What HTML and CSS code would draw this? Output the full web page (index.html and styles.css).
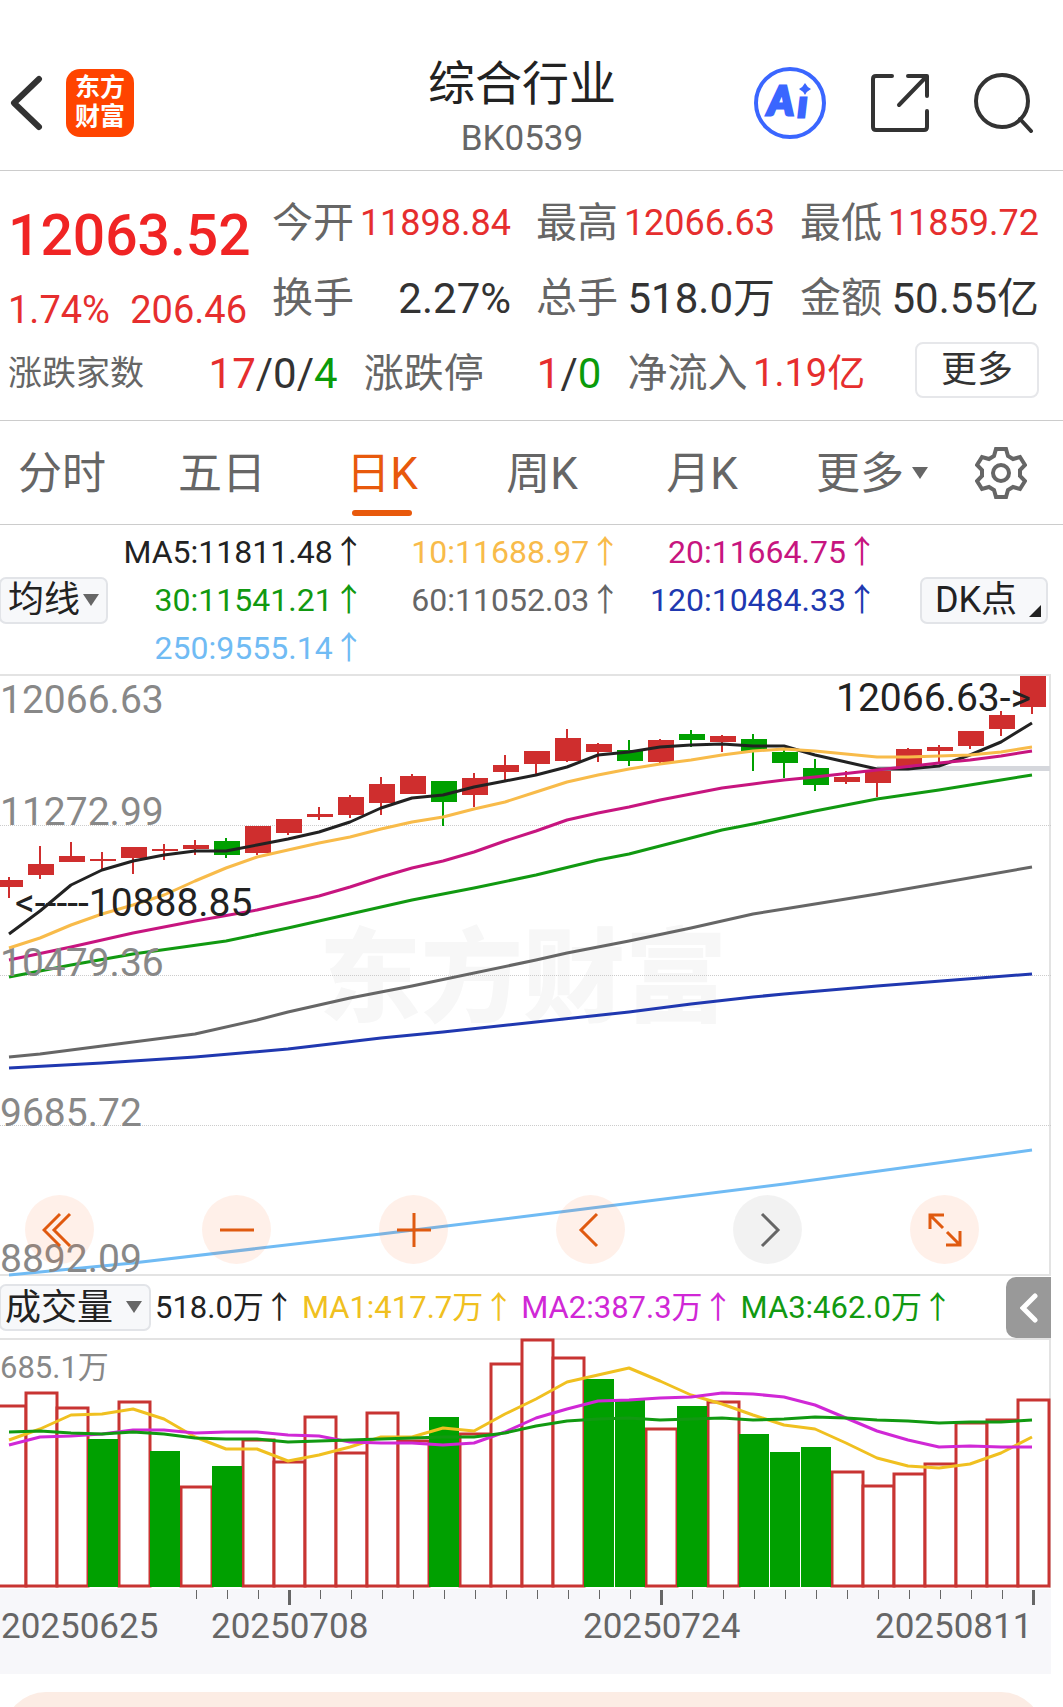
FILE: index.html
```html
<!DOCTYPE html>
<html lang="zh-CN">
<head>
    <meta charset="UTF-8">
    <meta name="viewport" content="width=device-width, initial-scale=1.0">
    <title>综合行业 BK0539</title>
    <link rel="stylesheet" href="styles.css">
</head>
<body>
    <header class="topbar">
        <div class="topbar-left">
            <a href="#" class="back" aria-label="返回">
                <svg width="34" height="56" viewBox="0 0 34 56"><path d="M29 4 L4 28 L29 52" fill="none" stroke="#333" stroke-width="6" stroke-linecap="round" stroke-linejoin="round"/></svg>
            </a>
            <a href="#" class="logo">东方<br>财富</a>
        </div>
        <div class="topbar-title">
            <h1>综合行业</h1>
            <p>BK0539</p>
        </div>
        <div class="topbar-right">
            <button type="button" class="icon-btn" aria-label="AI">
                <svg width="72" height="72" viewBox="0 0 72 72">
                    <circle cx="36" cy="36" r="34" fill="none" stroke="#3a66ff" stroke-width="4"/>
                    <text x="14" y="48" class="ai-text">A</text>
                    <text x="44" y="50" class="ai-text ai-small">ı</text>
                    <path d="M51 16 Q53 20 57 22 Q53 24 51 28 Q49 24 45 22 Q49 20 51 16Z" fill="#3a66ff"/>
                </svg>
            </button>
            <button type="button" class="icon-btn" aria-label="分享">
                <svg width="58" height="58" viewBox="0 0 58 58" fill="none" stroke="#333" stroke-width="4" stroke-linecap="round" stroke-linejoin="round"><path d="M21 2 H5 Q2 2 2 5 V53 Q2 56 5 56 H53 Q56 56 56 53 V37"/><path d="M37 2 H56 V22"/><path d="M55 3 L28 31"/></svg>
            </button>
            <button type="button" class="icon-btn" aria-label="搜索">
                <svg width="60" height="60" viewBox="0 0 60 60" fill="none" stroke="#333" stroke-width="4" stroke-linecap="round"><circle cx="28" cy="28" r="26"/><path d="M46 46 L57 58"/></svg>
            </button>
        </div>
    </header>

    <section class="quote">
        <div class="quote-top">
            <div class="quote-main">
                <div class="price">12063.52</div>
                <div class="change"><span>1.74%</span><span>206.46</span></div>
            </div>
            <div class="stat"><span class="name">今开</span><span class="val small up">11898.84</span></div>
            <div class="stat"><span class="name">最高</span><span class="val small up">12066.63</span></div>
            <div class="stat"><span class="name">最低</span><span class="val small up">11859.72</span></div>
            <div class="stat"><span class="name">换手</span><span class="val">2.27%</span></div>
            <div class="stat"><span class="name">总手</span><span class="val">518.0万</span></div>
            <div class="stat"><span class="name">金额</span><span class="val">50.55亿</span></div>
        </div>
        <div class="quote-bottom">
            <div class="stat"><span class="name name-sm">涨跌家数</span><span class="val"><span class="up">17</span>/0/<span class="down">4</span></span></div>
            <div class="stat"><span class="name name-md">涨跌停</span><span class="val"><span class="up">1</span>/<span class="down">0</span></span></div>
            <div class="stat"><span class="name name-md">净流入</span><span class="val flow up">1.19亿</span></div>
            <button type="button" class="more-btn">更多</button>
        </div>
    </section>

    <nav class="tabs">
        <a href="#">分时</a>
        <a href="#">五日</a>
        <a href="#" class="active">日K</a>
        <a href="#">周K</a>
        <a href="#">月K</a>
        <a href="#" class="tab-more">更多<span class="caret"></span></a>
        <button type="button" class="icon-btn" aria-label="设置">
            <svg width="52" height="52" viewBox="0 0 52 52" fill="none" stroke="#666" stroke-width="4"><circle cx="26" cy="26" r="8"/><path d="M21 2 H31 L33 9 L38 12 L45 10 L50 18 L45 23 V29 L50 34 L45 42 L38 40 L33 43 L31 50 H21 L19 43 L14 40 L7 42 L2 34 L7 29 V23 L2 18 L7 10 L14 12 L19 9Z"/></svg>
        </button>
    </nav>

    <section class="ma-bar">
        <div class="picker">
            <select aria-label="指标"><option>均线</option></select>
            <span class="caret"></span>
        </div>
        <div class="ma-list">
            <span class="c-ma5">MA5:11811.48↑</span>
            <span class="c-ma10">10:11688.97↑</span>
            <span class="c-ma20">20:11664.75↑</span>
            <span class="c-ma30">30:11541.21↑</span>
            <span class="c-ma60">60:11052.03↑</span>
            <span class="c-ma120">120:10484.33↑</span>
            <span class="c-ma250">250:9555.14↑</span>
        </div>
        <button type="button" class="dk-btn">DK点</button>
    </section>

    <section class="price-chart">
        <svg id="priceChart" viewBox="0 674 1063 603"></svg>
        <div class="controls">
            <button type="button" aria-label="最早"><svg width="36" height="36" viewBox="0 0 36 36"><path d="M18 2 L2 18 L18 34 M28 2 L12 18 L28 34"/></svg></button>
            <button type="button" aria-label="缩小"><svg width="36" height="36" viewBox="0 0 36 36"><path d="M1 18 H35"/></svg></button>
            <button type="button" aria-label="放大"><svg width="36" height="36" viewBox="0 0 36 36"><path d="M1 18 H35 M18 1 V35"/></svg></button>
            <button type="button" aria-label="向左"><svg width="36" height="36" viewBox="0 0 36 36"><path d="M24 2 L8 18 L24 34"/></svg></button>
            <button type="button" class="disabled" aria-label="向右"><svg width="36" height="36" viewBox="0 0 36 36"><path d="M12 2 L28 18 L12 34"/></svg></button>
            <button type="button" aria-label="全屏"><svg width="36" height="36" viewBox="0 0 36 36"><path d="M17 3 H3 V17 M3 3 L16 16 M33 19 V33 H19 M33 33 L20 20"/></svg></button>
        </div>
    </section>

    <section class="vol-bar">
        <div class="picker picker-wide">
            <select aria-label="副图"><option>成交量</option></select>
            <span class="caret"></span>
        </div>
        <div class="vol-list">
            <span class="c-ma5">518.0万↑</span>
            <span class="c-v1">MA1:417.7万↑</span>
            <span class="c-v2">MA2:387.3万↑</span>
            <span class="c-ma30">MA3:462.0万↑</span>
        </div>
        <button type="button" class="drawer-btn" aria-label="展开">
            <svg width="18" height="30" viewBox="0 0 18 30"><path d="M15 3 L3 15 L15 27" fill="none" stroke="#fff" stroke-width="5" stroke-linecap="round"/></svg>
        </button>
    </section>

    <section class="vol-chart">
        <svg id="volChart" viewBox="0 1338 1063 336"></svg>
    </section>

    <div class="bottom-peek">
        <div class="bottom-card"></div>
    </div>

    <script src="kline.js"></script>
</body>
</html>
```
FILE: styles.css
```css
* {
    box-sizing: border-box;
}

body {
    margin: 0;
    background: #fff;
    color: #333;
    font-family: Roboto, "Noto Sans CJK SC", sans-serif;
    overflow-x: hidden;
}

a {
    color: inherit;
    text-decoration: none;
}

button,
select {
    font-family: inherit;
    color: inherit;
    margin: 0;
    padding: 0;
    border: none;
    background: none;
    cursor: pointer;
}

svg {
    display: block;
}

.up { color: #e62e2e; }
.down { color: #0a9b0a; }

/* header */
.topbar {
    display: grid;
    grid-template-columns: 1fr auto 1fr;
    align-items: center;
    padding: 36px 29px 0 10px;
    border-bottom: 1px solid #ccc;
}

.topbar-left,
.topbar-right {
    display: flex;
    align-items: center;
}

.topbar-left {
    gap: 22px;
}

.topbar-right {
    justify-content: flex-end;
    gap: 45px;
}

.logo {
    width: 68px;
    height: 68px;
    padding-top: 4px;
    border-radius: 14px;
    background: #ff4400;
    color: #fff;
    font-size: 25px;
    line-height: 29px;
    font-weight: 700;
    text-align: center;
}

.topbar-title {
    padding: 19px 0 5px;
    text-align: center;
}

.topbar-title h1 {
    margin: 0;
    font-size: 47px;
    line-height: 58px;
    font-weight: 400;
    color: #222;
}

.topbar-title p {
    margin: 0;
    font-size: 35px;
    line-height: 52px;
    color: #666;
}

.ai-text {
    font: italic 900 39px Lato, sans-serif;
    fill: #3a66ff;
    stroke: #3a66ff;
    stroke-width: 3;
}

.ai-small {
    font-size: 36px;
}

/* quote */
.quote {
    padding: 15px 24px 9px 8px;
    border-bottom: 1px solid #ccc;
}

.quote-top {
    display: grid;
    grid-template-columns: repeat(4, minmax(0, 1fr));
    grid-auto-rows: 75px;
    column-gap: 25px;
}

.quote-main {
    grid-row: span 2;
    color: #e62e2e;
}

.price {
    font-size: 57px;
    line-height: 99px;
    font-weight: 500;
    color: #f02424;
}

.change {
    display: flex;
    justify-content: space-between;
    font-size: 38px;
    line-height: 51px;
}

.stat {
    display: flex;
    justify-content: space-between;
    align-items: center;
    line-height: 75px;
    white-space: nowrap;
}

.name {
    font-size: 41px;
    color: #666;
}

.name-md { font-size: 40px; }
.name-sm { font-size: 34px; }

.val { font-size: 42px; }
.val.small { font-size: 36px; }
.val.flow { font-size: 38px; }

.quote-bottom {
    display: grid;
    grid-template-columns: 330fr 238fr 238fr 148fr;
    align-items: center;
    column-gap: 26px;
}

.more-btn {
    height: 56px;
    margin: 0 0 8px 24px;
    border: 2px solid #e6e7ea;
    border-radius: 8px;
    font-size: 36px;
    line-height: 48px;
}

/* period tabs */
.tabs {
    display: grid;
    grid-template-columns: repeat(5, 160fr) 180fr 78fr;
    margin-left: -18px;
    padding-right: 23px;
    border-bottom: 1px solid #ccc;
    color: #666;
    font-size: 44px;
    line-height: 99px;
    text-align: center;
}

.tabs a {
    padding-top: 4px;
    white-space: nowrap;
}

.tabs .active {
    position: relative;
    color: #e8590c;
}

.tabs .active::after {
    content: "";
    position: absolute;
    left: 50%;
    bottom: 8px;
    width: 60px;
    height: 6px;
    margin-left: -30px;
    border-radius: 3px;
    background: #e8590c;
}

.tabs .icon-btn {
    display: flex;
    align-items: center;
    justify-content: center;
}

.caret {
    display: inline-block;
    border: 8px solid transparent;
    border-top: 12px solid #666;
    border-bottom: none;
}

.tab-more .caret {
    margin-left: 8px;
    vertical-align: 10px;
}

/* moving average legend */
.ma-bar {
    display: flex;
    align-items: center;
    padding: 3px 15px 2px 0;
}

.picker {
    position: relative;
    flex: none;
    width: 109px;
    margin-left: -1px;
}

.picker select {
    appearance: none;
    display: block;
    width: 100%;
    height: 47px;
    padding-left: 7px;
    border: 2px solid #e2e4e8;
    border-radius: 7px;
    background: #f7f8fa;
    color: #222;
    font-size: 36px;
    line-height: 42px;
}

.picker .caret {
    position: absolute;
    right: 9px;
    top: 17px;
    pointer-events: none;
}

.picker-wide {
    width: 152px;
}

.picker-wide select {
    padding-left: 4px;
}

.ma-list {
    flex: 1;
    display: grid;
    grid-template-columns: repeat(3, 1fr);
    margin-right: 42px;
    font-size: 32px;
    line-height: 48px;
    text-align: right;
    white-space: nowrap;
}

.c-ma5 { color: #222; }
.c-ma10 { color: #f8bb4a; }
.c-ma20 { color: #c7157f; }
.c-ma30 { color: #119911; }
.c-ma60 { color: #666; }
.c-ma120 { color: #2038b0; }
.c-ma250 { color: #70bbf4; }
.c-v1 { color: #f0c020; }
.c-v2 { color: #d028d6; }

.dk-btn {
    position: relative;
    flex: none;
    width: 128px;
    height: 47px;
    padding-right: 16px;
    border: 2px solid #e2e4e8;
    border-radius: 7px;
    background: #f7f8fa;
    color: #222;
    font-size: 36px;
    line-height: 42px;
}

.dk-btn::after {
    content: "";
    position: absolute;
    right: 5px;
    bottom: 5px;
    border-left: 12px solid transparent;
    border-bottom: 12px solid #222;
}

/* charts */
.price-chart {
    position: relative;
}

.price-chart > svg,
.vol-chart > svg {
    width: 100%;
    height: auto;
}

.axis-label {
    font-size: 39px;
    fill: #888;
}

.peak-label {
    font-size: 39px;
    fill: #222;
}

.vol-label {
    font-size: 31px;
    fill: #888;
}

.date-label {
    font-size: 35px;
    fill: #666;
}

.watermark {
    font-size: 102px;
    font-weight: 900;
    fill: #f7f7f7;
}

.controls {
    position: absolute;
    left: 0;
    right: 0;
    bottom: 13px;
    display: flex;
    justify-content: space-between;
    padding: 0 84px 0 25px;
}

.controls button {
    display: flex;
    align-items: center;
    justify-content: center;
    width: 69px;
    height: 69px;
    border-radius: 50%;
    background: rgba(255, 110, 40, 0.1);
}

.controls path {
    fill: none;
    stroke: #e05a10;
    stroke-width: 3;
}

.controls .disabled {
    background: rgba(0, 0, 0, 0.05);
}

.controls .disabled path {
    stroke: #666;
}

/* volume legend */
.vol-bar {
    display: flex;
    align-items: center;
    padding-right: 12px;
}

.vol-list {
    flex: 1;
    display: flex;
    gap: 7px;
    margin-left: 4px;
    font-size: 31px;
    line-height: 61px;
    white-space: nowrap;
}

.drawer-btn {
    display: flex;
    align-items: center;
    justify-content: center;
    width: 45px;
    height: 61px;
    border-radius: 10px 0 0 10px;
    background: #999;
}

/* only the top edge of the next card shows */
.bottom-peek {
    height: 33px;
    padding: 18px 20px 0 4px;
    overflow: hidden;
}

.bottom-card {
    height: 90px;
    border-radius: 42px;
    background: #fcece4;
}
```
FILE: kline.js
```js
const STEP = 31;
const FIRST_X = 9;
const RED = '#cf2e2e';
const GREEN = '#00a000';

// body top, body bottom, wick top, wick bottom, 1 when the day closed lower
const candles = [
    [880, 887, 877, 898], [864, 875, 846, 879], [856, 862, 842, 862], [859, 861, 852, 870],
    [847, 858, 847, 874], [849, 851, 844, 860], [845, 849, 840, 855], [841, 855, 838, 858, 1],
    [826, 853, 826, 855], [819, 833, 819, 835], [814, 817, 807, 820], [797, 815, 795, 818],
    [784, 803, 777, 815], [776, 794, 774, 794], [781, 802, 781, 826, 1], [778, 795, 773, 807],
    [765, 772, 755, 780], [751, 764, 751, 774], [738, 761, 729, 762], [744, 752, 743, 762],
    [750, 761, 740, 766, 1], [740, 762, 739, 765], [734, 740, 730, 747, 1], [736, 742, 735, 752],
    [739, 751, 734, 771, 1], [752, 763, 750, 778, 1], [768, 785, 759, 791, 1], [777, 782, 771, 784],
    [771, 783, 770, 797], [749, 767, 748, 769], [747, 751, 745, 762], [731, 746, 731, 749],
    [715, 729, 711, 736], [676, 707, 676, 714]
];

// [day index, y] pairs
const averages = [
    ['#2038b0', [[0, 1068], [3, 1063], [6, 1057], [9, 1049], [12, 1038], [14, 1032], [17, 1022], [20, 1012], [22, 1004], [24, 997], [25, 994], [28, 986], [33, 974]]],
    ['#70bbf4', [[0, 1275], [4, 1263], [12, 1234], [17, 1215], [25, 1184], [33, 1150]]],
    ['#666', [[0, 1057], [1, 1054], [3, 1046], [6, 1034], [8, 1020], [9, 1012], [11, 998], [13, 986], [17, 960], [18, 953], [20, 941], [22, 928], [24, 914], [25, 909], [28, 894], [33, 867]]],
    ['#119911', [[0, 977], [2, 965], [4, 954], [7, 941], [9, 928], [11, 914], [13, 900], [15, 888], [17, 875], [19, 860], [20, 854], [21, 846], [22, 838], [23, 830], [24, 824], [26, 811], [27, 805], [28, 799], [30, 790], [32, 780], [33, 775]]],
    ['#222', [[0, 934], [1, 911], [2, 885], [3, 870], [4, 861], [5, 855], [6, 851], [7, 851], [8, 845], [9, 839], [10, 832], [11, 822], [12, 808], [13, 798], [14, 795], [15, 787], [16, 781], [17, 775], [18, 767], [19, 755], [20, 752], [21, 747], [22, 745], [23, 744], [24, 746], [25, 746], [26, 755], [27, 762], [28, 769], [29, 769], [30, 766], [31, 755], [32, 742], [33, 723]]],
    ['#f8bb4a', [[0, 948], [1, 938], [2, 925], [3, 914], [4, 905], [5, 895], [6, 881], [7, 868], [8, 857], [9, 850], [10, 843], [11, 837], [12, 829], [13, 822], [14, 817], [15, 809], [16, 802], [17, 792], [18, 782], [19, 775], [20, 769], [21, 764], [22, 760], [23, 755], [24, 751], [25, 749], [26, 751], [27, 754], [28, 757], [29, 757], [30, 756], [31, 755], [32, 752], [33, 747]]],
    ['#c7157f', [[0, 960], [2, 947], [4, 933], [6, 921], [8, 910], [10, 896], [11, 887], [12, 877], [13, 868], [14, 861], [15, 852], [16, 841], [17, 831], [18, 820], [19, 813], [20, 807], [21, 800], [22, 794], [23, 788], [24, 784], [25, 780], [26, 777], [28, 770], [30, 763], [31, 760], [32, 756], [33, 751]]]
];

// top of each volume bar
const volumes = [
    1406, 1393, 1408, 1439, 1402, 1451, 1487, 1466, 1440, 1462, 1417, 1453,
    1413, 1441, 1417, 1434, 1364, 1340, 1358, 1379, 1400, 1429, 1406, 1402,
    1434, 1452, 1447, 1472, 1486, 1474, 1464, 1423, 1420, 1400
];
const volDown = [3, 5, 7, 14, 19, 20, 22, 24, 25, 26];

const volAverages = [
    ['#f0c020', [1440, 1429, 1415, 1414, 1409, 1419, 1437, 1449, 1449, 1461, 1455, 1447, 1437, 1437, 1428, 1431, 1414, 1399, 1382, 1375, 1368, 1381, 1395, 1404, 1415, 1425, 1429, 1443, 1458, 1466, 1468, 1464, 1453, 1437]],
    ['#d028d6', [1445, 1437, 1436, 1434, 1430, 1430, 1433, 1432, 1432, 1435, 1436, 1442, 1443, 1443, 1445, 1443, 1432, 1418, 1409, 1401, 1400, 1398, 1397, 1393, 1394, 1397, 1405, 1418, 1431, 1440, 1447, 1446, 1447, 1447]],
    ['#119911', [1432, 1431, 1433, 1434, 1432, 1434, 1438, 1439, 1439, 1442, 1441, 1440, 1439, 1438, 1437, 1437, 1433, 1426, 1421, 1419, 1418, 1420, 1419, 1418, 1420, 1419, 1417, 1418, 1420, 1421, 1423, 1422, 1422, 1420]]
];

const dayX = i => FIRST_X + i * STEP;

function rect(x, y, w, h, fill) {
    return `<rect x="${x}" y="${y}" width="${w}" height="${h}" fill="${fill}"/>`;
}

function text(x, y, cls, value) {
    return `<text x="${x}" y="${y}" class="${cls}">${value}</text>`;
}

function polyline(points, color) {
    const list = points.map(([i, y]) => `${dayX(i)},${y}`).join(' ');
    return `<polyline points="${list}" fill="none" stroke="${color}" stroke-width="3" stroke-linejoin="round"/>`;
}

function drawPrice() {
    let out = text(319, 1014, 'watermark', '东方财富');

    out += rect(0, 674, 1051, 2, '#e3e3e3') + rect(0, 1274, 1051, 2, '#e3e3e3') + rect(1049, 674, 2, 602, '#e3e3e3');
    [825, 975, 1125].forEach(y => {
        out += `<line x1="0" x2="1051" y1="${y}.5" y2="${y}.5" stroke="#ccc" stroke-dasharray="1 1"/>`;
    });
    out += rect(877, 766, 173, 5, '#d5d7dc');

    candles.forEach(([top, bottom, high, low, down], i) => {
        const color = down ? GREEN : RED;
        out += rect(dayX(i) - 1, high, 2, low - high, color);
        out += rect(dayX(i) - 12, top, 26, bottom - top, color);
    });
    averages.forEach(([color, points]) => {
        out += polyline(points, color);
    });

    out += text(0, 713, 'axis-label', '12066.63');
    out += text(0, 825, 'axis-label', '11272.99');
    out += text(0, 976, 'axis-label', '10479.36');
    out += text(0, 1126, 'axis-label', '9685.72');
    out += text(0, 1272, 'axis-label', '8892.09');
    out += text(15, 916, 'peak-label', '&lt;-----10888.85');
    out += text(836, 711, 'peak-label', '12066.63-&gt;');
    document.getElementById('priceChart').innerHTML = out;
}

function drawVolume() {
    let out = rect(0, 1338, 1051, 2, '#e3e3e3') + rect(1049, 1338, 2, 250, '#e3e3e3');
    out += rect(0, 1589, 1051, 85, '#f7f7fa');
    out += text(0, 1378, 'vol-label', '685.1万');

    volumes.forEach((top, i) => {
        const x = i * STEP - 6;
        if (!volDown.includes(i)) {
            out += `<rect x="${x + 1}" y="${top}" width="${STEP}" height="${1586 - top}" fill="#fff" stroke="#c83432" stroke-width="3"/>`;
        }
    });
    volDown.forEach(i => {
        out += rect(i * STEP - 5, volumes[i], STEP - 1, 1587 - volumes[i], GREEN);
    });
    volAverages.forEach(([color, ys]) => {
        out += polyline(ys.map((y, i) => [i, y]), color);
    });

    // time axis, long marks on the labelled days
    for (let i = 6; i < volumes.length; i++) {
        const major = i === 9 || i === 21 || i === 33;
        out += rect(dayX(i) + (major ? 0 : 1), 1590, major ? 3 : 1, major ? 15 : 9, '#666');
    }
    out += text(1, 1638, 'date-label', '20250625');
    out += text(211, 1638, 'date-label', '20250708');
    out += text(583, 1638, 'date-label', '20250724');
    out += text(875, 1638, 'date-label', '20250811');
    document.getElementById('volChart').innerHTML = out;
}

drawPrice();
drawVolume();
```
